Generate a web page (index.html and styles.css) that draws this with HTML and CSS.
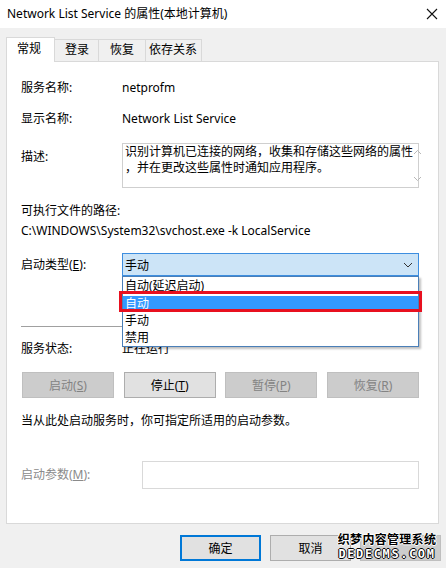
FILE: index.html
```html
<!DOCTYPE html>
<html lang="zh-CN">
<head>
    <meta charset="UTF-8">
    <title>Network List Service 的属性(本地计算机)</title>
    <link rel="stylesheet" href="styles.css">
</head>
<body>
    <div class="window">
        <div class="titlebar">
            <span class="title">Network List Service 的属性(本地计算机)</span>
            <svg class="close" width="12" height="12" viewBox="0 0 12 12">
                <path d="M1 1 L11 11 M11 1 L1 11" stroke="#111" stroke-width="1.1" fill="none"/>
            </svg>
        </div>

        <ul class="tabs">
            <li class="tab active">常规</li>
            <li class="tab">登录</li>
            <li class="tab mid">恢复</li>
            <li class="tab wide">依存关系</li>
        </ul>

        <div class="panel">
            <div class="row r-name">
                <span class="label">服务名称:</span>
                <span class="value">netprofm</span>
            </div>
            <div class="row r-display">
                <span class="label">显示名称:</span>
                <span class="value">Network List Service</span>
            </div>
            <div class="row r-desc">
                <span class="label desc-label">描述:</span>
                <div class="textbox">
                    <div class="textbox-text">识别计算机已连接的网络，收集和存储这些网络的属性<br>，并在更改这些属性时通知应用程序。</div>
                    <div class="scroll">
                        <svg width="9" height="6" viewBox="0 0 9 6"><path d="M1 5 L4.5 1.5 L8 5" stroke="#b8b8b8" fill="none"/></svg>
                        <svg width="9" height="6" viewBox="0 0 9 6"><path d="M1 1 L4.5 4.5 L8 1" stroke="#b8b8b8" fill="none"/></svg>
                    </div>
                </div>
            </div>

            <div class="path-label">可执行文件的路径:</div>
            <div class="path-value">C:\WINDOWS\System32\svchost.exe -k LocalService</div>

            <div class="row r-start">
                <span class="label">启动类型(<u>E</u>):</span>
                <div class="combo">
                    <div class="combo-box">
                        <span>手动</span>
                        <svg width="10" height="6" viewBox="0 0 10 6"><path d="M1 1 L5 5 L9 1" stroke="#333" fill="none"/></svg>
                    </div>
                    <ul class="dropdown">
                        <li>自动(延迟启动)</li>
                        <li class="selected">自动</li>
                        <li>手动</li>
                        <li>禁用</li>
                    </ul>
                    <div class="mark"></div>
                </div>
            </div>

            <hr class="sep">

            <div class="row r-status">
                <span class="label">服务状态:</span>
                <span class="value">正在运行</span>
            </div>

            <div class="actions">
                <button class="btn disabled">启动(<u>S</u>)</button>
                <button class="btn">停止(<u>T</u>)</button>
                <button class="btn disabled">暂停(<u>P</u>)</button>
                <button class="btn disabled">恢复(<u>R</u>)</button>
            </div>

            <p class="note">当从此处启动服务时，你可指定所适用的启动参数。</p>

            <div class="row r-param">
                <span class="label muted">启动参数(<u>M</u>):</span>
                <div class="param-input"></div>
            </div>
        </div>

        <div class="footer">
            <button class="btn dlg default">确定</button>
            <button class="btn dlg">取消</button>
            <!-- 应用 按钮的文字被水印挡住 -->
            <button class="btn dlg disabled" aria-label="应用"></button>
            <div class="watermark">
                <span class="wm-cn">织梦内容管理系统</span>
                <span class="wm-en">DEDECMS.COM</span>
            </div>
        </div>
    </div>
</body>
</html>
```

FILE: styles.css
```css
* { margin: 0; padding: 0; box-sizing: border-box; }
body { background: #f0f0f0; font-family: "Noto Sans", "Noto Sans CJK SC", sans-serif; font-size: 12px; color: #000; }
ul { list-style: none; }
u { text-decoration: underline; text-underline-offset: 1px; }

.window { width: 446px; height: 568px; position: relative; overflow: hidden; }

.titlebar { height: 28px; background: #fff; display: flex; align-items: center; justify-content: space-between; padding: 0 7px 1px 7px; }
.title { font-size: 12px; line-height: 16px; }
.close { margin-right: 1px; }

.tabs { display: flex; align-items: flex-end; height: 33px; padding-left: 6px; }
.tab { height: 22px; line-height: 20px; padding: 0 9px 0 10px; border: 1px solid #d9d9d9; border-bottom: none; border-left: none; background: #f0f0f0; font-size: 12px; }
.tab.active { height: 25px; line-height: 22px; background: #fff; border-left: 1px solid #d9d9d9; padding: 0 13px 0 10px; margin-bottom: -1px; position: relative; z-index: 1; }
.tab.mid { padding: 0 11px; }
.tab.wide { padding: 0 4px 0 3px; }

.panel { margin: 0 7px 0 6px; height: 463px; background: #fff; border: 1px solid #d9d9d9; padding: 18px 19px 0 14px; }

.row { display: flex; align-items: center; }
.label { width: 101px; flex-shrink: 0; line-height: 16px; }
.value { line-height: 16px; }
.muted { color: #8a8a8a; }

.r-display { margin-top: 15px; }
.r-desc { margin-top: 16px; align-items: flex-start; }
.desc-label { margin-top: 6px; }
.textbox { width: 297px; height: 45px; border: 1px solid #cfcfcf; display: flex; justify-content: space-between; }
.textbox-text { padding: 0 0 0 2px; line-height: 16px; white-space: nowrap; }
.scroll { width: 17px; display: flex; flex-direction: column; justify-content: space-between; align-items: center; padding: 5px 0 5px; }

.path-label { margin-top: 15px; line-height: 16px; }
.path-value { margin-top: 4px; line-height: 16px; }

.r-start { margin-top: 14px; }
.combo { position: relative; width: 297px; }
.combo-box { height: 23px; background: #cce4f7; border: 1px solid #3d8ee0; display: flex; align-items: center; justify-content: space-between; padding: 0 5px 0 2px; }
.dropdown { position: absolute; top: 23px; left: 0; width: 297px; background: #fff; border: 1px solid #4a7fb8; box-shadow: 2px 2px 2px rgba(0,0,0,0.25); z-index: 2; padding-top: 1px; }
.dropdown li { height: 16.5px; line-height: 16px; padding-left: 2px; }
.dropdown li.selected { background: #3399ff; color: #fff; margin: 1px 0; }
.mark { position: absolute; top: 38px; left: -3px; width: 303px; height: 21px; border: 3px solid #e8101f; z-index: 3; }

.sep { border: none; border-top: 1px solid #a0a0a0; margin-top: 50px; width: 398px; }

.r-status { margin-top: 14px; }

.actions { display: flex; justify-content: space-between; margin-top: 15px; width: 398px; padding-left: 1px; }
.btn { width: 92px; height: 26px; font-family: inherit; font-size: 12px; background: #e1e1e1; border: 1px solid #adadad; color: #000; }
.btn.disabled { background: #cccccc; border-color: #bfbfbf; color: #838383; }

.note { margin-top: 15px; line-height: 16px; }

.r-param { margin-top: 32px; }
.r-param .label { width: 121px; }
.param-input { width: 278px; height: 28px; border: 1px solid #d9d9d9; }

.footer { display: flex; justify-content: flex-end; gap: 9px; padding: 11px 5px 0 0; position: relative; }
.btn.dlg { width: 81px; }
.btn.default { border: 2px solid #0078d7; }

.watermark { position: absolute; left: 337px; top: 9px; display: flex; flex-direction: column; align-items: center; width: 100px; }
.wm-cn { font-weight: bold; font-size: 12px; line-height: 14px; color: #000; letter-spacing: 0.3px; text-shadow: 1px 0 0 #fff, -1px 0 0 #fff, 0 1px 0 #fff, 0 -1px 0 #fff; }
.wm-en { font-family: "DejaVu Sans Mono", monospace; font-weight: bold; font-size: 12px; line-height: 14px; letter-spacing: 1.6px; color: #fff; text-shadow: 1px 0 0 #000, -1px 0 0 #000, 0 1px 0 #000, 0 -1px 0 #000; }
```
